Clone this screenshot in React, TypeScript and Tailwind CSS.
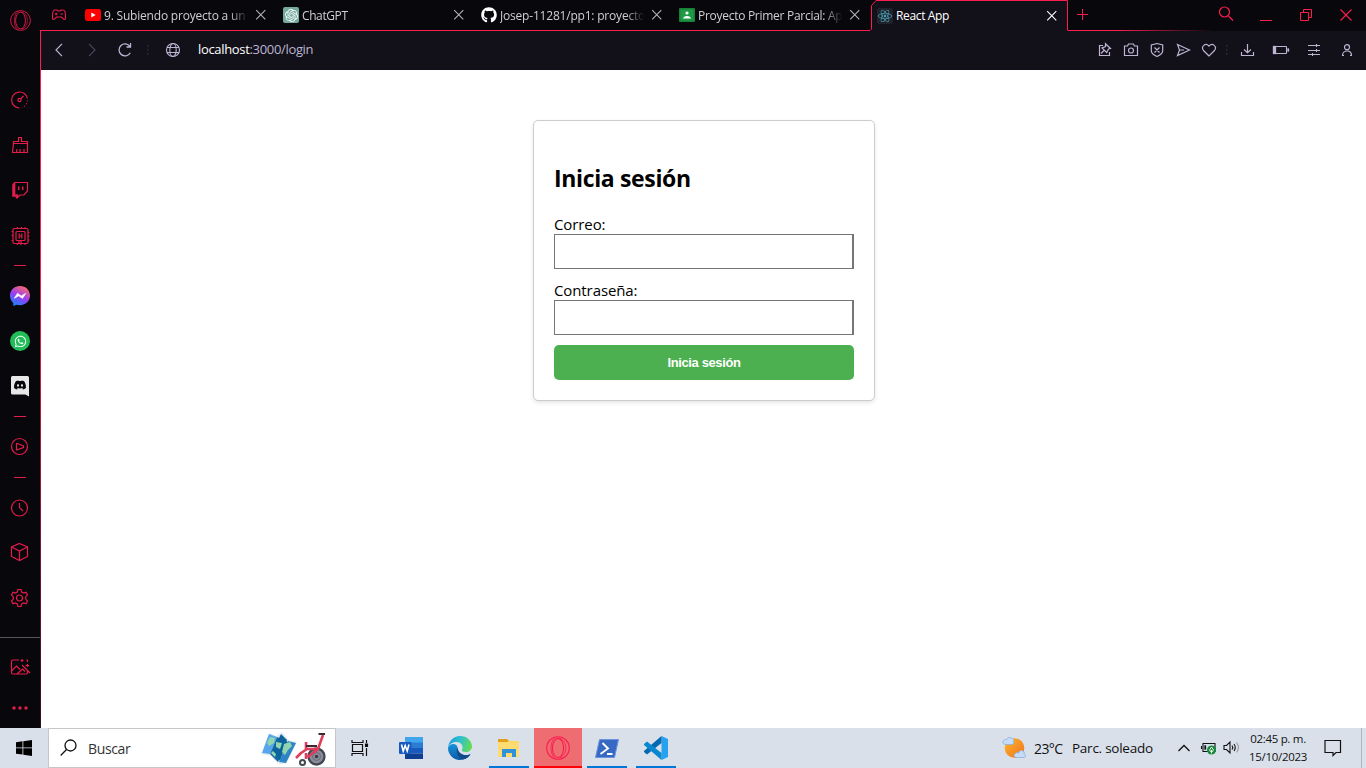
import type { ReactNode } from "react";
import { FaGithub, FaWhatsapp, FaReact, FaDiscord } from "react-icons/fa";
import { SiOpenai } from "react-icons/si";

const ui = "font-['Open_Sans','Noto_Sans',sans-serif]";

function Glyph({ children, className = "", w = 24, h = 24, sw = 1.2 }: { children: ReactNode; className?: string; w?: number; h?: number; sw?: number }) {
  return (
    <svg width={w} height={h} viewBox={`0 0 ${w} ${h}`} fill="none" stroke="currentColor" strokeWidth={sw} className={`block shrink-0 ${className}`}>
      {children}
    </svg>
  );
}

function Cell({ h, children }: { h: string; children?: ReactNode }) {
  return <div className={`flex w-10 shrink-0 items-center justify-center ${h}`}>{children}</div>;
}

function Dash() {
  return (
    <Cell h="h-[11px]">
      <div className="h-px w-3 bg-[#e31c4b]" />
    </Cell>
  );
}

function OperaMark({ size, className = "" }: { size: number; className?: string }) {
  return (
    <svg width={size} height={size} viewBox="0 0 24 24" fill="none" stroke="currentColor" strokeWidth="1.1" className={`block shrink-0 ${className}`}>
      <circle cx="12" cy="12" r="11.3" />
      <ellipse cx="12" cy="12" rx="5.6" ry="9.6" />
      <path d="M9 1.500C6 4 5 8 5 12S6 20 9 22.500M13.500 2.300C18 3.500 19.800 8 19.800 12S18 20.500 13.500 21.700" strokeWidth=".8" />
    </svg>
  );
}

function Sidebar() {
  return (
    <aside className="flex w-[41px] shrink-0 bg-[#08070c]">
      <div className="flex w-10 flex-col text-[#e31c4b]">
        <Cell h="h-10"><OperaMark size={21} /></Cell>
        <div className="h-[38px] shrink-0" />
        <Cell h="h-[43px]">
          <Glyph>
            <path d="M11.500 20A8 8 0 1 1 19.500 10.500" />
            <path d="M19.500 12.500A8 8 0 0 1 14 19.500" strokeDasharray="1 2" />
            <circle cx="11.500" cy="12" r="1.600" />
            <path d="M12.700 10.800L15.500 8" />
          </Glyph>
        </Cell>
        <Cell h="h-[47px]">
          <Glyph>
            <path d="M5.500 10.500V8.500H10.500V4.500H13.500V8.500H19.500V10.500ZM5.500 10.500L4.500 19.500H19.500V10.500M8.500 19.500L9 16M12 19.500V16M16 19.500V16" />
          </Glyph>
        </Cell>
        <Cell h="h-11">
          <Glyph>
            <path d="M6.500 4.500H19.500V13L16 17H12L9.500 19.500V17H6.500Z" />
            <path d="M5 6L7 4V17H10V19L8 20.500V18.500H4.500V7Z" fill="currentColor" strokeWidth=".5" />
            <path d="M10.700 8.500V12M14.700 8.500V12" strokeWidth="1.500" />
          </Glyph>
        </Cell>
        <Cell h="h-12">
          <Glyph>
            <rect x="5" y="4.500" width="15" height="15" rx="1.500" />
            <rect x="8" y="7.500" width="9" height="9" rx="1" />
            <path d="M11.200 9.500V14.500M13.800 9.500V14.500M11 12H14" strokeWidth="1.200" />
            <path d="M9.500 4.500V3M13.500 4.500V3M17 4.500V3M9.500 21V19.500M13 21V16.500M17 21V19.500M5 7.500H3.500M5 11.500H3.500M5 16.500H3.500M21.500 8.500H20M21.500 12H20M21.500 16H20M11 16.500V19.500" />
          </Glyph>
        </Cell>
        <Dash />
        <Cell h="h-[50px]">
          <Glyph sw={0}>
            <defs>
              <linearGradient id="msg" x1=".2" y1="1" x2=".7" y2="0">
                <stop offset="0" stopColor="#0a8cff" />
                <stop offset=".5" stopColor="#9a3df5" />
                <stop offset="1" stopColor="#ff6a67" />
              </linearGradient>
            </defs>
            <path d="M12 2C6.300 2 2 6.100 2 11.500C2 14.500 3.200 17.200 5.300 19V22L8.500 20.700C9.600 21 10.800 21.200 12 21.200C17.700 21.200 22 17 22 11.600S17.700 2 12 2Z" fill="url(#msg)" />
            <path d="M6.300 14.300L9.500 9.300L13.200 12L17.700 9.400L14.500 14.400L10.800 11.800Z" fill="white" stroke="white" strokeWidth=".7" />
          </Glyph>
        </Cell>
        <Cell h="h-10">
          <div className="flex size-5 items-center justify-center rounded-full bg-[#20bd58] text-white"><FaWhatsapp size={13} /></div>
        </Cell>
        <Cell h="h-[50px]">
          <Glyph sw={0}>
            <path d="M4.500 2H19.500Q21 2 21 3.500V22.500L17.500 20.500H4.500Q3 20.500 3 19V3.500Q3 2 4.500 2Z" fill="#e8e8e8" />
            <FaDiscord x="5.500" y="4.500" size={13} color="#08070c" />
          </Glyph>
        </Cell>
        <Dash />
        <Cell h="h-[50px]">
          <Glyph><circle cx="11.500" cy="11.500" r="8" /><path d="M8.500 8.500V15L15.500 12.500V11L9.500 8.500Z" /></Glyph>
        </Cell>
        <Dash />
        <Cell h="h-[49px]">
          <Glyph><circle cx="11.500" cy="12" r="8" /><path d="M11.500 7V11.500L15 15" /></Glyph>
        </Cell>
        <Cell h="h-10">
          <Glyph><path d="M11.500 3.500L19.500 7V16.500L11.500 20.500L3.500 16.500V7ZM3.500 7L11.500 11L19.500 7M11.500 11V20.500" /></Glyph>
        </Cell>
        <Cell h="h-[51px]">
          <Glyph>
            <path d="M10 3.500H13L13.700 6L15.500 7L18 6.300L19.500 9L17.700 10.900V13.100L19.500 15L18 17.700L15.500 17L13.700 18L13 20.500H10L9.300 18L7.500 17L5 17.700L3.500 15L5.300 13.100V10.900L3.500 9L5 6.300L7.500 7L9.300 6Z" />
            <circle cx="11.500" cy="12" r="3" />
          </Glyph>
        </Cell>
        <div className="h-[14px] shrink-0" />
        <div className="h-px shrink-0 bg-[#55565a]" />
        <Cell h="h-[57px]">
          <Glyph>
            <path d="M11 5H5Q3.500 5 3.500 6.500V17.500Q3.500 19 5 19H18Q19.500 19 19.500 17.500V16" />
            <path d="M3.500 16L8.500 11L12 14.500M9 19L14.500 14L17 16.500M14 10L22 18M14 4V7M12.500 5.500H15.500M18.500 5H19.500V7M17.500 10.500H21M19.500 9V12" />
          </Glyph>
        </Cell>
        <Cell h="h-[26px]">
          <Glyph sw={0}><g fill="currentColor"><circle cx="6" cy="12" r="1.700" /><circle cx="12" cy="12" r="1.700" /><circle cx="18" cy="12" r="1.700" /></g></Glyph>
        </Cell>
      </div>
      <div className="mt-[30px] w-px bg-linear-to-b from-[#fa1e4e] from-35% to-[#3b0b1b]" />
    </aside>
  );
}

function Close({ className }: { className: string }) {
  return <Glyph w={12} h={12} sw={1.1} className={className}><path d="M1.200 1.200L10.300 10.300M10.300 1.200L1.200 10.300" /></Glyph>;
}

function Tab({ icon, title, tracking }: { icon: ReactNode; title: string; tracking: string }) {
  return (
    <div className="flex h-full w-[198px] shrink-0 items-center pl-2">
      <div className="flex w-4 shrink-0 justify-center">{icon}</div>
      <div className={`ml-[3px] w-[146px] overflow-hidden pt-[2px] text-[12px] whitespace-nowrap text-[#d0cfd3] [mask-image:linear-gradient(to_right,#000_86%,transparent_99%)] ${tracking}`}>{title}</div>
      <Close className="ml-[5px] text-[#b4b3b8]" />
    </div>
  );
}

function TabStrip() {
  return (
    <div className="flex h-[31px] bg-[#08070c]">
      <div className="flex h-[31px] w-[829px] shrink-0 items-center border-b border-[#fa1e4e]">
        <Glyph w={16} h={12} sw={1.100} className="mr-[10px] ml-[10px] text-[#f01d4f]">
          <path d="M4 1H6L7 2H9L10 1H12C14 1 14.500 4 14.500 6.500V9C14.500 11 13 11 12 9.500L10.500 8H5.500L4 9.500C3 11 1.500 11 1.500 9V6.500C1.500 4 2 1 4 1ZM4 5H6.500M5.200 3.700V6.300M9.500 5H12" />
        </Glyph>
        <Tab
          title="9. Subiendo proyecto a un r"
          tracking="tracking-[-0.2px]"
          icon={<Glyph w={16} h={12} sw={0}><rect width="16" height="12" rx="2.500" fill="#f00" /><path d="M6.300 3.500V8.500L10.700 6Z" fill="white" /></Glyph>}
        />
        <Tab
          title="ChatGPT"
          tracking="tracking-[-0.4px]"
          icon={<div className="flex size-4 items-center justify-center rounded-[2px] bg-[#74aa9c] text-white"><SiOpenai size={13} /></div>}
        />
        <Tab title="Josep-11281/pp1: proyecto" tracking="tracking-[-0.2px]" icon={<FaGithub size={16} color="white" />} />
        <Tab
          title="Proyecto Primer Parcial: Apl"
          tracking="tracking-[-0.28px]"
          icon={<Glyph w={16} h={14} sw={0}><rect width="16" height="14" rx="1" fill="#188038" /><rect x="1.500" y="1.500" width="13" height="11" fill="#1e9a44" /><circle cx="8" cy="5" r="1.600" fill="white" /><path d="M4 10.500Q4.500 8 8 8T12 10.500Z" fill="white" /></Glyph>}
        />
      </div>
      <div className="relative flex h-[31px] w-[198px] shrink-0 items-center">
        <svg className="absolute inset-0" width="198" height="31" viewBox="0 0 198 31">
          <path d="M0 31V30.500L1.500 29V5.500L6 .5H197.500V31Z" fill="#121019" />
          <path d="M0 30.500L1.500 29V5.500L6 .5H197.500V30.500" fill="none" stroke="#fa1e4e" />
        </svg>
        <div className="relative flex items-center">
          <div className="ml-[7px] flex size-4 items-center justify-center rounded-[2px] bg-[#20232a] text-[#4ba3bb]"><FaReact size={14} /></div>
          <div className="ml-[3px] w-[149px] text-[12px] tracking-[-0.35px] whitespace-nowrap text-white">React App</div>
          <Close className="ml-px text-white" />
        </div>
      </div>
      <div className="flex grow flex-col">
        <div className="flex h-[30px] items-center text-[#fa1e4e]">
          <Glyph w={12} h={12} sw={1} className="-mt-[2px] ml-[8px]"><path d="M6.500 1V12M1 6.500H12" /></Glyph>
          <Glyph w={16} h={16} sw={1.200} className="-mt-[2px] ml-[130px]"><circle cx="6.500" cy="6" r="5" /><path d="M10.500 10L15 14.500" /></Glyph>
          <div className="mt-[10px] ml-[26px] h-px w-3 bg-[#fa1e4e]" />
          <Glyph w={14} h={14} sw={1} className="ml-[27px]"><path d="M1.500 4.500H9.500V12.500H1.500ZM4.500 4.500V1.500H12.500V9.500H9.500" /></Glyph>
          <Glyph w={14} h={14} sw={1.100} className="ml-[26px]"><path d="M1.500 1.500L12.500 12.500M12.500 1.500L1.500 12.500" /></Glyph>
        </div>
        <div className="h-px w-[147px] bg-linear-to-r from-[#fa1e4e] from-35% to-transparent" />
      </div>
    </div>
  );
}

function Toolbar() {
  return (
    <div className="flex h-[39px] items-center bg-[#121019] pb-px text-[#beb5d2]">
      <Glyph w={10} h={14} sw={1.200} className="ml-[13px]"><path d="M8 .8L2 7L8 13.200" /></Glyph>
      <Glyph w={10} h={14} sw={1.200} className="ml-[23px] text-[#4b4658]"><path d="M2 .8L8 7L2 13.200" /></Glyph>
      <Glyph w={16} h={16} sw={1.300} className="ml-[20px]"><path d="M13.300 10.800A6 6 0 1 1 13 4.500M13.500 1V5H9.500" /></Glyph>
      <Glyph w={4} h={12} sw={0} className="ml-[13px] text-[#302c3c]"><path d="M1 1h1.500v1.500H1zM1 5h1.500v1.500H1zM1 9h1.500v1.500H1z" fill="currentColor" /></Glyph>
      <Glyph w={16} h={16} sw={1.100} className="ml-[15px]"><circle cx="8" cy="8" r="6.500" /><ellipse cx="8" cy="8" rx="3.200" ry="6.500" /><path d="M2 5.500H14M2 10.500H14" /></Glyph>
      <div className="ml-[17px] text-[13px] tracking-[-0.33px] whitespace-nowrap"><span className="text-white">localhost</span>:3000/login</div>
      <div className="grow" />
      <Glyph w={16} h={16} sw={1.200} className="mr-[10px]"><path d="M6 3.500H2.500V13.500H12.500V10M8.500 1.700L13.500 6.500L11.500 7L9.700 10.500L5 6L8.500 4.500ZM7 8.500L4 11.500" /></Glyph>
      <Glyph w={16} h={16} sw={1.200} className="mr-[10px]"><path d="M1.500 4H4.500L5.500 2H10.500L11.500 4H14.500V13.500H1.500Z" /><circle cx="8" cy="8.500" r="2.500" /></Glyph>
      <Glyph w={16} h={16} sw={1.200} className="mr-[10px]"><path d="M8 1.500L13.700 3V9Q13.500 12 8 14.500Q2.500 12 2.300 9V3ZM5.500 5.500L10.500 10.500M10.500 5.500L5.500 10.500" /></Glyph>
      <Glyph w={16} h={16} sw={1.200} className="mr-[10px]"><path d="M2.500 2.500L14.500 8L2.500 13.500L4.500 8ZM4.500 8H9" /></Glyph>
      <Glyph w={16} h={16} sw={1.200} className="mr-[8px]"><path d="M8 14L2.500 8.500C-.5 4.500 4.500 .2 8 4.200C11.500 .2 16.500 4.500 13.500 8.500Z" /></Glyph>
      <Glyph w={4} h={12} sw={0} className="mr-[11px] text-[#302c3c]"><path d="M1 1h1.500v1.500H1zM1 5h1.500v1.500H1zM1 9h1.500v1.500H1z" fill="currentColor" /></Glyph>
      <Glyph w={16} h={16} sw={1.200} className="mr-[16px]"><path d="M7.500 2V10.500M4 7.500L7.500 10.700L11 7.500M1.500 10V13.500H13.500V10" /></Glyph>
      <Glyph w={18} h={10} sw={1.100} className="mr-[17px]"><rect x="1.500" y="1.500" width="13" height="7" rx=".5" /><path d="M1 1H4V9H1ZM15.500 3.500H17V6.500H15.500Z" fill="currentColor" strokeWidth=".3" /></Glyph>
      <Glyph w={14} h={14} sw={1.100} className="mr-[19px]"><path d="M1 2.500H13M1 7.500H13M1 11.500H13M9.500 1V4M9.500 6V9M5.500 10V13" /></Glyph>
      <Glyph w={14} h={14} sw={1.200} className="mr-[12px]"><circle cx="7" cy="4.200" r="2.500" /><path d="M2.500 12.500C2.500 6.500 11.500 6.500 11.500 12.500M2 12.500H4M10 12.500H12" /></Glyph>
    </div>
  );
}

function LoginCard() {
  return (
    <form className="flex h-[281px] w-[342px] flex-col rounded-[5px] border border-[#ccc] bg-white px-5 text-black shadow-[0_2px_4px_rgba(0,0,0,0.1)]" onSubmit={(e) => e.preventDefault()}>
      <h2 className="mt-[41px] h-8 text-[23px] leading-8 font-bold tracking-[-0.35px] whitespace-nowrap">Inicia sesión</h2>
      <label htmlFor="mail" className="mt-[20px] h-5 text-[15px] leading-5 tracking-[-0.1px]">Correo:</label>
      <input id="mail" type="email" className="h-[35px] w-[300px] shrink-0 border border-r-2 border-[#767676] bg-white px-2 outline-none" />
      <label htmlFor="pass" className="mt-[11px] h-5 text-[15px] leading-5 tracking-[-0.1px]">Contraseña:</label>
      <input id="pass" type="password" className="h-[35px] w-[300px] shrink-0 border border-r-2 border-[#767676] bg-white px-2 outline-none" />
      <button className="mt-[10px] h-[35px] w-[300px] shrink-0 rounded-[5px] bg-[#4caf50] pt-px font-['Liberation_Sans',sans-serif] text-[13px] font-bold tracking-[-0.38px] text-white">Inicia sesión</button>
    </form>
  );
}

function TaskButton({ children, bar = false }: { children: ReactNode; bar?: boolean }) {
  return (
    <div className="flex h-10 w-12 shrink-0 flex-col items-center">
      <div className="flex h-[38px] items-center pt-[2px]">{children}</div>
      {bar && <div className="h-[2px] w-10 bg-[#0078d7]" />}
    </div>
  );
}

function SearchArt() {
  return (
    <svg width="68" height="38" viewBox="0 0 68 38" className="block">
      <path d="M9 4L1 25L11 27L18 35L26 35L37 13L29 11L22 3L16 7Z" fill="#e6edf2" />
      <path d="M9 5L2 24L10 25L17 8Z" fill="#57a5eb" />
      <path d="M17 8L10 25L18 33L28 13Z" fill="#116aa5" />
      <path d="M21 5L13 21L20 32L27 11Z" fill="#0b649c" />
      <path d="M28 12L19 33L26 34L36 14Z" fill="#2f84c5" />
      <path d="M10 8L15 9L14 14L9 17L7 14ZM16 13L22 14L20 20L16 18ZM24 15L30 13L32 17L28 21L25 26L22 23ZM13 22L16 25L15 28L11 24Z" fill="#8fd6b0" />
      <g fill="none" stroke="#424852">
        <circle cx="56.500" cy="27.500" r="8" strokeWidth="2.300" fill="#8b8c9a" />
        <circle cx="56.500" cy="27.500" r="4" stroke="#686b78" />
        <circle cx="42.500" cy="33.500" r="2.500" strokeWidth="2" />
      </g>
      <circle cx="56.500" cy="27.500" r="1.700" fill="#343943" />
      <path d="M63 6L58 20H46V13M47 20L41 24L36 29M46 24V30M58 20L48 28" fill="none" stroke="#de3e5b" strokeWidth="2.600" strokeLinejoin="round" />
      <path d="M58.500 5H65M46 17H57" stroke="#3a2833" strokeWidth="2" />
    </svg>
  );
}

function Taskbar() {
  return (
    <footer className="flex h-10 shrink-0 bg-[#d9e0ea] text-[#111]">
      <div className="flex w-12 shrink-0 items-center justify-center">
        <svg width="16" height="16" viewBox="0 0 16 16" fill="black"><path d="M0 2.300L6.500 1.300V7.500H0ZM7.300 1.200L16 0V7.500H7.300ZM0 8.300H6.500V14.600L0 13.700ZM7.300 8.300H16V16L7.300 14.800Z" /></svg>
      </div>
      <div className="flex h-10 w-72 shrink-0 items-center border border-[#c4c6c9] bg-white pl-[11px]">
        <Glyph w={17} h={18} sw={1.300}><circle cx="10.500" cy="6.500" r="5.500" /><path d="M6.500 10.500L.7 16.500" /></Glyph>
        <div className="ml-[11px] w-[172px] text-[14px] tracking-[-0.35px] text-[#333]">Buscar</div>
        <SearchArt />
      </div>
      <TaskButton>
        <Glyph w={18} h={18} sw={1.200}><path d="M1 1V3.500H12V1M1 17V14.500H12V17M1.500 5.500H11.500V12.500H1.500ZM15.500 1V4M15.500 9V17" /><path d="M14.500 5H16.500V7.500H14.500Z" fill="black" /></Glyph>
      </TaskButton>
      <div className="ml-[3px] flex gap-px">
        <TaskButton>
          <svg width="24" height="22" viewBox="0 0 24 22">
            <path d="M6 0H24V6H6Z" fill="#41a5ee" /><path d="M6 5.500H24V11H6Z" fill="#2b7cd3" /><path d="M6 11H24V16.500H6Z" fill="#185abd" /><path d="M6 16.500H24V22H6Z" fill="#103f91" />
            <rect y="5" width="12.500" height="12" rx="1" fill="#185abd" />
            <path d="M2.500 7.500L4.200 14L6.200 8.500L8.200 14L10 7.500" fill="none" stroke="white" strokeWidth="1.600" />
          </svg>
        </TaskButton>
        <TaskButton>
          <svg width="24" height="24" viewBox="0 0 24 24">
            <defs>
              <linearGradient id="ea" x1="0" x2="1" y1=".3" y2=".5"><stop stopColor="#1b9de2" /><stop offset=".5" stopColor="#2fc2c9" /><stop offset="1" stopColor="#66dc52" /></linearGradient>
              <linearGradient id="eb" x1="0" x2="0" y1="0" y2="1"><stop stopColor="#1595dc" /><stop offset="1" stopColor="#0b59a8" /></linearGradient>
            </defs>
            <path d="M0 12A12 12 0 0 0 15 23.600C19 22.700 21.500 20 22.500 18C16 21 9 18 9.500 12C9.600 9 7 7.500 4.500 8C2 8.500 .5 10 0 12Z" fill="url(#eb)" />
            <path d="M9.500 11.500C7.500 15 9 21.500 15 23.600C19 22.700 21.500 20 22.500 18.300C17 20.500 10.500 18.500 9.500 11.500Z" fill="#124a88" />
            <path d="M0 12C.5 5 5.500 0 12 0C19 0 24 5 24 10.500C24 14 21 16 18 16C15 16 13.500 15 14 14C15.500 12 14.500 6 8.500 6C4 6 1 8.500 0 12Z" fill="url(#ea)" />
          </svg>
        </TaskButton>
        <TaskButton bar>
          <svg width="22" height="20" viewBox="0 0 22 20"><path d="M0 1H9L11 3H21V19H0Z" fill="#ffd767" /><path d="M0 1H9L11 3L9 4H0Z" fill="#e0a21b" /><path d="M0 5H21V18H0Z" fill="#ffdc72" /><path d="M4 19V11H18V19H14V15H8V19Z" fill="#2f91d8" /></svg>
        </TaskButton>
        <div className="flex h-10 w-12 flex-col items-center border-b-2 border-[#fb0307] bg-[#ed6d70]">
          <div className="flex h-[38px] items-center pt-[2px] text-[#fb1c4f]"><OperaMark size={24} /></div>
        </div>
        <TaskButton bar>
          <svg width="24" height="19" viewBox="0 0 24 19"><path d="M4.500 .5H23.500L19.500 18.500H.5Z" fill="#3768c4" stroke="#6a95dd" /><path d="M7.500 4L13 9.500L5.500 15M12 15H17.500" fill="none" stroke="white" strokeWidth="1.900" /></svg>
        </TaskButton>
        <TaskButton bar>
          <svg width="24" height="24" viewBox="0 0 24 24"><path d="M17.500 0L24 3V21L17.500 24Z" fill="#27a2ee" /><path d="M17.500 0V7L3 18.500L0 16V15L17.500 0Z" fill="#0469ae" /><path d="M0 8L3 5.500L17.500 17V24L0 9Z" fill="#0988d0" /></svg>
        </TaskButton>
      </div>
      <div className="grow" />
      <div className="flex items-center">
        <svg width="26" height="24" viewBox="0 0 26 24">
          <defs><linearGradient id="sun" x1="0" x2="1" y1="0" y2="1"><stop stopColor="#ffb62c" /><stop offset="1" stopColor="#ed721d" /></linearGradient></defs>
          <circle cx="12.500" cy="12" r="9.800" fill="url(#sun)" />
          <g fill="#c5dcf8" stroke="#82abe0" strokeWidth=".7"><path d="M3.500 8.500Q0 8 1 5Q2.500 3 4.500 3.500Q6 0 9 2Q13 2.500 11.500 5.500Q13 8 10 8.500Z" /><path d="M14 21.500Q10.500 20 13 17.500Q14.500 16 16.500 17Q18 13 21 15Q23 15.500 22 18Q25.500 20 22 21.500Z" /></g>
        </svg>
        <div className="ml-[6px] w-[38px] text-[14px] tracking-[-0.6px] whitespace-nowrap">23°C</div>
        <div className="w-[106px] text-[13.5px] tracking-[-0.25px] whitespace-nowrap">Parc. soleado</div>
        <Glyph w={12} h={8} sw={1.300}><path d="M.5 7L6 1.500L11.500 7" /></Glyph>
        <Glyph w={17} h={14} sw={1.100} className="ml-[10px]">
          <path d="M3 2.500H15V10.500H3ZM1.500 5V8" /><path d="M4.500 4.500V8.500H6V4.500Z" fill="currentColor" strokeWidth=".3" />
          <circle cx="11.500" cy="9" r="4.500" fill="#16893b" stroke="none" /><path d="M11.500 6L9.500 9L11.500 11.500L13.500 9ZM11.500 9V12.500" stroke="white" strokeWidth=".9" />
        </Glyph>
        <Glyph w={18} h={16} sw={1.100} className="ml-[6px]"><path d="M1 5.500H3.500L7 2V13L3.500 9.500H1ZM9 5.500Q10.500 7.500 9 9.500M11 4Q13.500 7.500 11 11" /><path d="M13.500 2.500Q17.500 7.500 13.500 12.500" stroke="#929aa5" /></Glyph>
        <div className="ml-[7px] w-[60px] text-center text-[11.5px] leading-[18px] tracking-[-0.3px] whitespace-nowrap"><div>02:45 p. m.</div><div>15/10/2023</div></div>
        <Glyph w={18} h={18} sw={1.200} className="ml-[16px]"><path d="M1 1.500H16.500V13.500H12L9 16.500V13.500H1Z" /></Glyph>
        <div className="ml-[19px] h-10 w-px bg-[#aeb5bf]" />
        <div className="w-1" />
      </div>
    </footer>
  );
}

export default function App() {
  return (
    <div className={`flex h-[768px] w-[1366px] flex-col overflow-hidden bg-white ${ui}`}>
      <div className="flex h-[728px] shrink-0">
        <Sidebar />
        <div className="flex w-[1325px] flex-col">
          <TabStrip />
          <Toolbar />
          <main className="flex grow justify-center bg-white pt-[50px] pl-px"><LoginCard /></main>
        </div>
      </div>
      <Taskbar />
    </div>
  );
}
